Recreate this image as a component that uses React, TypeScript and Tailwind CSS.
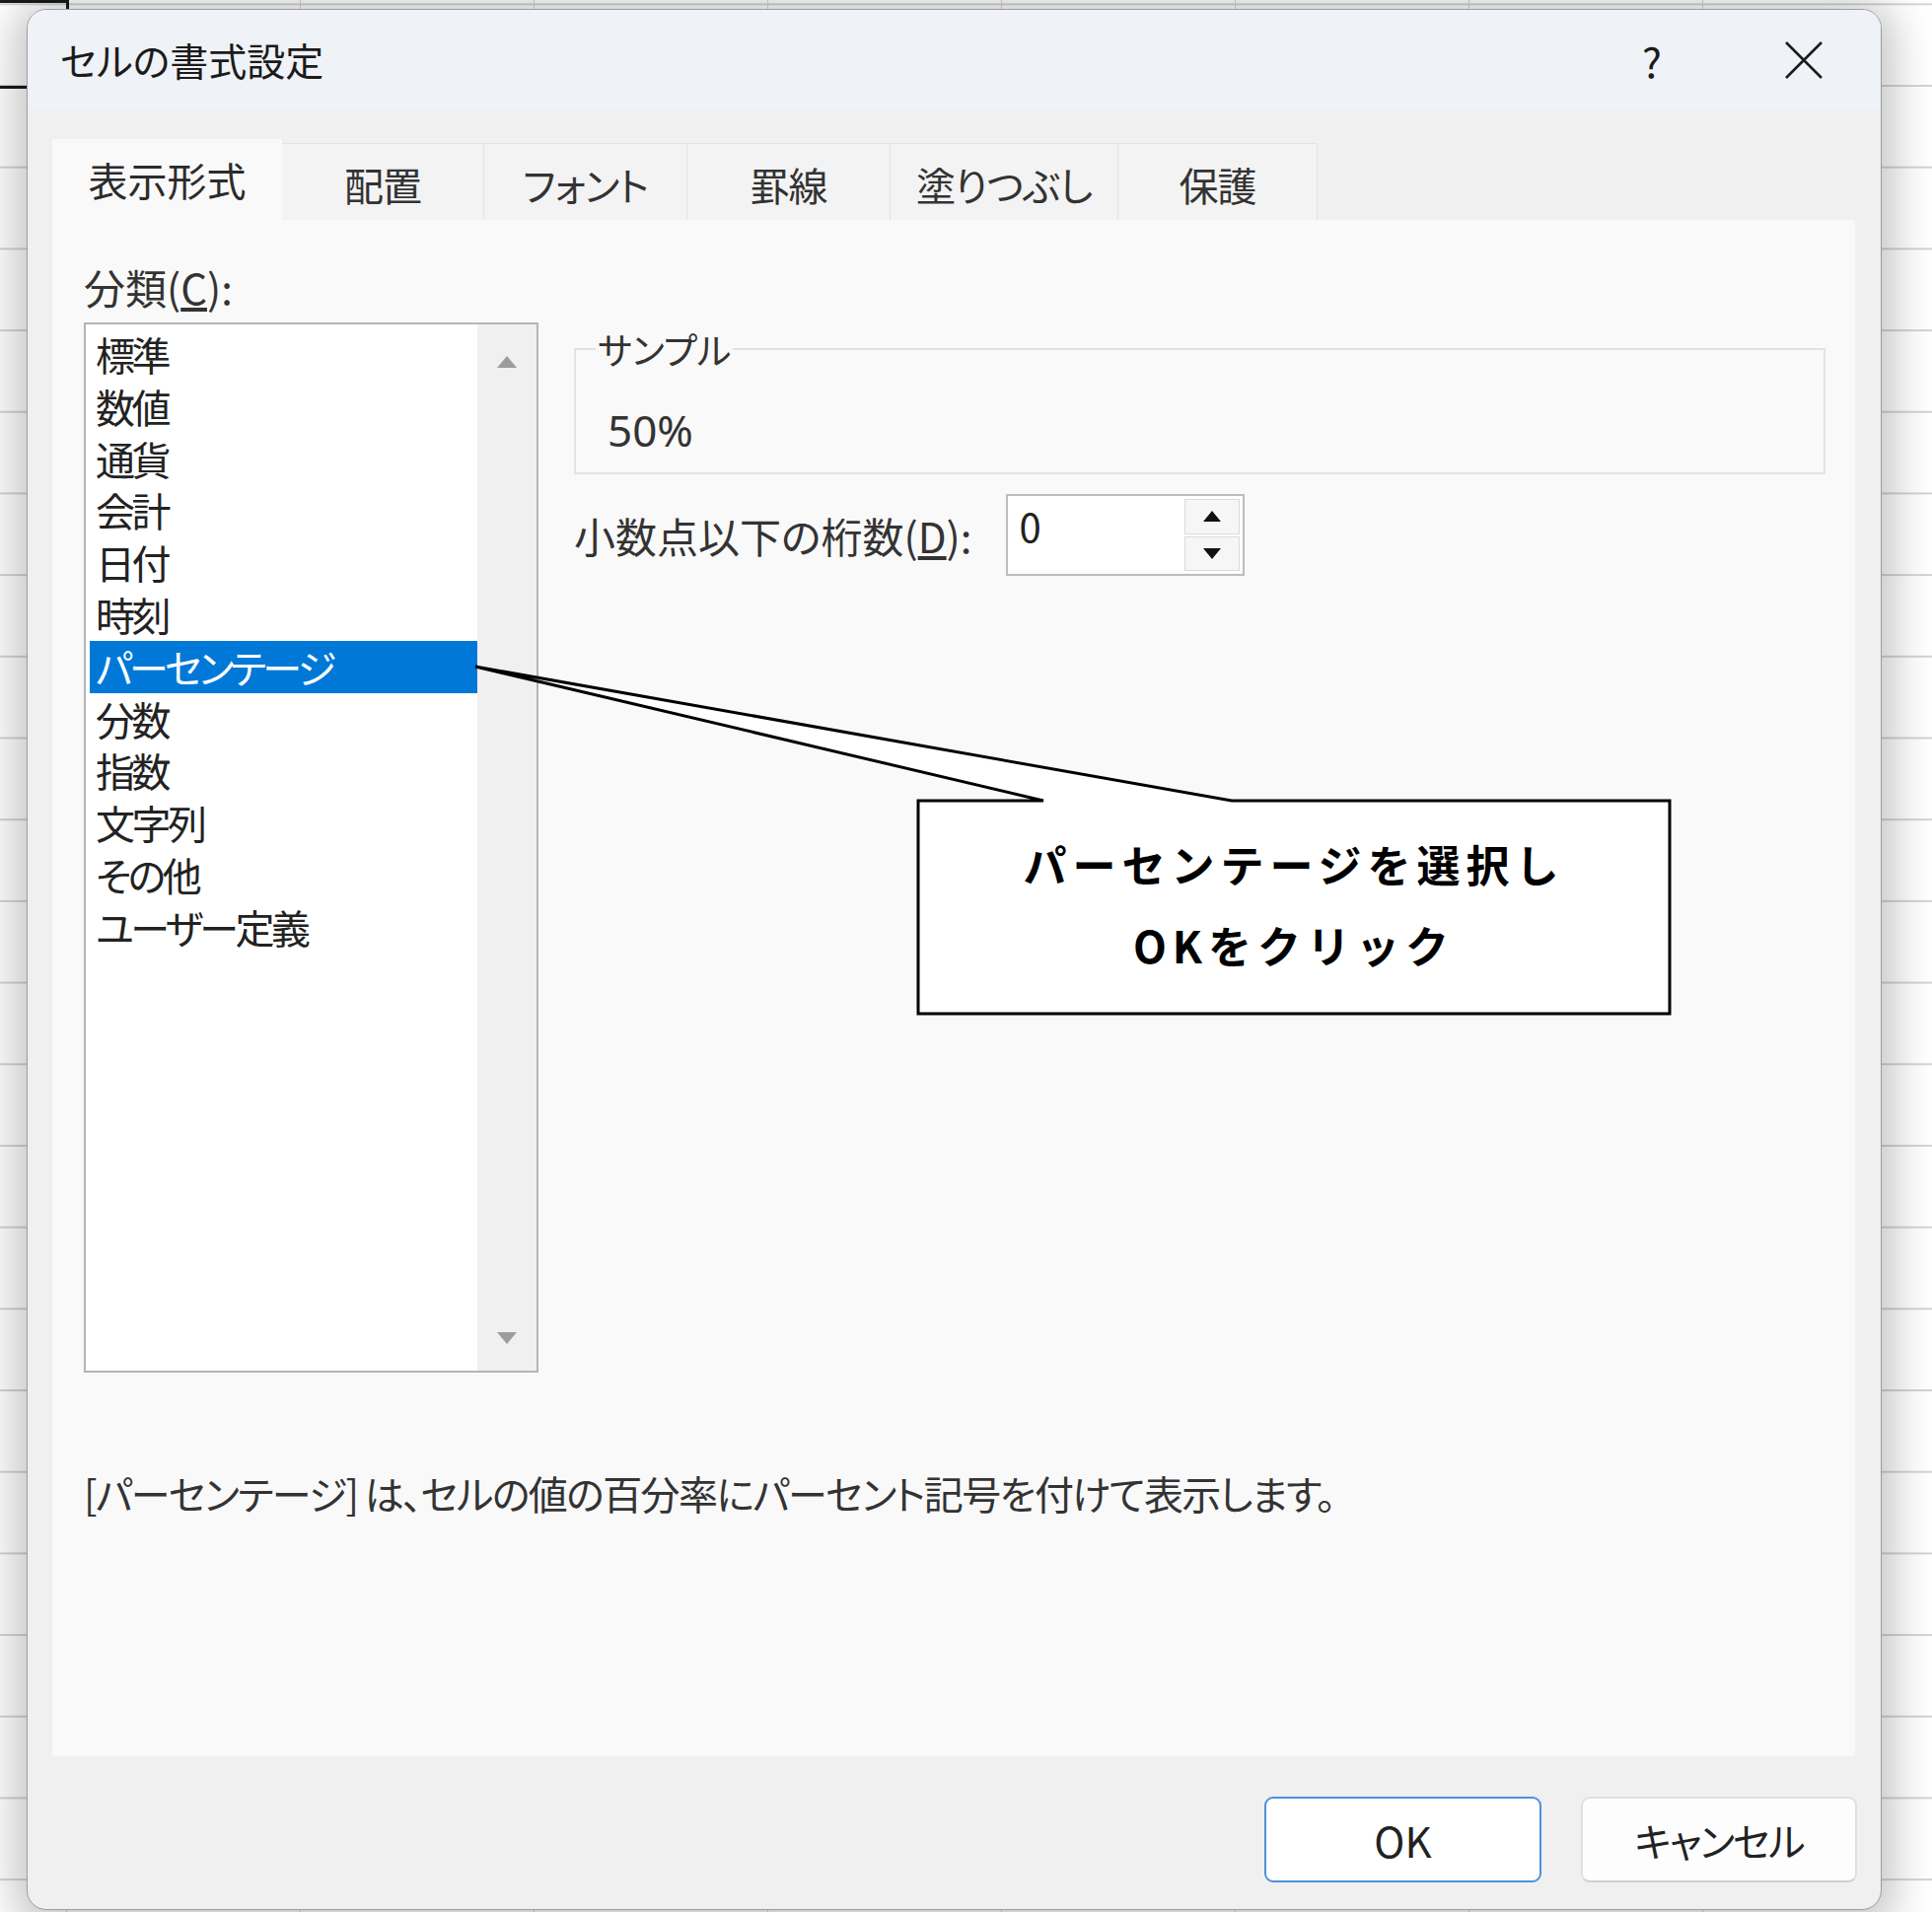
import React from "react";

const categories = [
  "標準",
  "数値",
  "通貨",
  "会計",
  "日付",
  "時刻",
  "パーセンテージ",
  "分数",
  "指数",
  "文字列",
  "その他",
  "ユーザー定義",
];

const tabs = [
  { label: "表示形式", w: "w-[233px]", active: true },
  { label: "配置", w: "w-[205px]" },
  { label: "フォント", w: "w-[206px]" },
  { label: "罫線", w: "w-[206px]" },
  { label: "塗りつぶし", w: "w-[231px]" },
  { label: "保護", w: "w-[202px]" },
];

function TitleBar() {
  return (
    <div className="flex h-[101px] shrink-0 items-center bg-[#eff2f7] pl-[33px] pr-[58px]">
      <span className="text-[39px] leading-none text-[#1b1b1b]">セルの書式設定</span>
      <span className="ml-auto w-[40px] text-center text-[42px] leading-none text-[#1b1b1b]">?</span>
      <svg className="ml-[114px]" width="40" height="40" viewBox="0 0 40 40">
        <path d="M2 2 L38 38 M38 2 L2 38" stroke="#1b1b1b" strokeWidth="2.6" fill="none" />
      </svg>
    </div>
  );
}

function Tabs() {
  return (
    <div className="flex h-[82px] items-end">
      {tabs.map((t) =>
        t.active ? (
          <div
            key={t.label}
            className={`${t.w} flex h-[82px] items-center justify-center bg-[#f9f9f9] text-[40px] text-[#2b2b2b]`}
          >
            {t.label}
          </div>
        ) : (
          <div
            key={t.label}
            className={`${t.w} flex h-[78px] items-center justify-center border-r border-t border-[#e3e3e3] bg-[#f3f3f3] pt-[4px] text-[40px] tracking-[-1px] text-[#333]`}
          >
            {t.label}
          </div>
        )
      )}
    </div>
  );
}

function Triangle({ up, className }: { up?: boolean; className?: string }) {
  return (
    <svg className={className} width="22" height="14" viewBox="0 0 22 14">
      <path d={up ? "M11 1 L21 13 L1 13 Z" : "M1 1 L21 1 L11 13 Z"} fill="currentColor" />
    </svg>
  );
}

function CategoryList() {
  return (
    <div className="flex h-[1065px] w-[461px] border-2 border-[#b5b5b5] bg-white">
      <div className="flex-1 pl-[4px] pt-[4px]">
        {categories.map((c) => {
          const sel = c === "パーセンテージ";
          return (
            <div
              key={c}
              className={`h-[52.8px] pl-[6px] text-[40px] leading-[52.8px] tracking-[-3.5px] ${
                sel ? "bg-[#0078d7] text-white" : "text-[#222]"
              }`}
            >
              {c}
            </div>
          );
        })}
      </div>
      <div className="flex w-[60px] flex-col items-center justify-between bg-[#f0f0f0] pb-[26px] pt-[31px] text-[#9c9c9c]">
        <Triangle up />
        <Triangle />
      </div>
    </div>
  );
}

function Spinner() {
  return (
    <div className="flex h-[83px] w-[242px] border-2 border-[#bdbdbd] bg-white">
      <div className="flex-1 pl-[11px] pt-[6px] text-[40px] leading-[48px] text-[#222]">0</div>
      <div className="my-[3px] mr-[3px] flex w-[56px] flex-col gap-[2px]">
        <div className="flex flex-1 items-center justify-center border border-[#dadada] bg-[#f6f6f6] text-[#111]">
          <svg width="18" height="11" viewBox="0 0 18 11">
            <path d="M9 0 L18 11 L0 11 Z" fill="currentColor" />
          </svg>
        </div>
        <div className="flex flex-1 items-center justify-center border border-[#dadada] bg-[#f6f6f6] text-[#111]">
          <svg width="18" height="11" viewBox="0 0 18 11">
            <path d="M0 0 L18 0 L9 11 Z" fill="currentColor" />
          </svg>
        </div>
      </div>
    </div>
  );
}

function NumberPanel() {
  return (
    <div className="flex h-[1558px] flex-col bg-[#f9f9f9] pl-[32px] pr-[30px] pt-[44px]">
      <div className="flex">
        <div className="w-[461px]">
          <div className="text-[42px] leading-[48px] text-[#333]">
            分類(<u>C</u>):
          </div>
          <div className="mt-[12px]">
            <CategoryList />
          </div>
        </div>
        <div className="ml-[36px] flex-1 pt-[63px]">
          <fieldset className="h-[151px] border-2 border-[#e2e2e2] px-[32px]">
            <legend className="-ml-[12px] px-[2px] text-[37px] leading-[48px] text-[#333]">サンプル</legend>
            <div className="pt-[30px] font-['Noto_Sans',sans-serif] text-[44px] leading-[56px] text-[#333]">
              50%
            </div>
          </fieldset>
          <div className="mt-[20px] flex items-center gap-[35px]">
            <span className="text-[42px] leading-[48px] text-[#333]">
              小数点以下の桁数(<u>D</u>):
            </span>
            <Spinner />
          </div>
        </div>
      </div>
      <div className="mt-[98px] text-[40px] leading-[48px] tracking-[-1.6px] text-[#333]">
        [パーセンテージ] は、セルの値の百分率にパーセント記号を付けて表示します。
      </div>
    </div>
  );
}

function Buttons() {
  return (
    <div className="-mr-[2px] flex justify-end gap-[40px] pt-[41px]">
      <button className="h-[87px] w-[281px] rounded-[9px] border-2 border-[#4a92dc] bg-white text-[42px] text-[#222]">
        OK
      </button>
      <button className="h-[87px] w-[280px] rounded-[9px] border-2 border-[#e0e0e0] border-b-[#cfcfcf] bg-[#fdfdfd] text-[40px] tracking-[-2px] text-[#222]">
        キャンセル
      </button>
    </div>
  );
}

function Callout() {
  return (
    <>
      <svg className="pointer-events-none absolute left-0 top-0" width="1959" height="1939" viewBox="0 0 1959 1939">
        <path
          d="M931 812 H1058 L482 676 L1249 812 H1693 V1028 H931 Z"
          fill="#ffffff"
          stroke="#000000"
          strokeWidth="3"
        />
      </svg>
      <div className="absolute left-[931px] top-[812px] flex h-[216px] w-[762px] flex-col items-center justify-center pt-[-4px] text-[44px] font-bold leading-[82px] tracking-[6px] text-black [font-feature-settings:normal]">
        <div className="-mt-[6px]">パーセンテージを選択し</div>
        <div>OKをクリック</div>
      </div>
    </>
  );
}

export default function App() {
  return (
    <div className="relative h-[1939px] w-[1959px] overflow-hidden bg-white bg-[linear-gradient(to_right,#d4d4d4_2px,transparent_2px),linear-gradient(to_bottom,#d4d4d4_2px,transparent_2px)] font-['Noto_Sans_CJK_JP','Noto_Sans',sans-serif] [background-position:66px_86px] [background-size:237px_82.7px] [font-feature-settings:'palt']">
      {/* selected cell behind the dialog */}
      <div className="absolute left-[-20px] top-[0px] h-[90px] w-[90px] border-[3px] border-[#1a1a1a]" />

      <div className="absolute left-[27px] top-[9px] flex h-[1928px] w-[1881px] flex-col overflow-hidden rounded-[20px] border border-[#9c9c9c] bg-[#f0f0f0] shadow-[0_6px_40px_14px_rgba(0,0,0,0.22)]">
        <TitleBar />
        <div className="flex flex-1 flex-col pl-[25px] pr-[26px] pt-[30px]">
          <Tabs />
          <NumberPanel />
          <Buttons />
        </div>
      </div>

      <Callout />
    </div>
  );
}
